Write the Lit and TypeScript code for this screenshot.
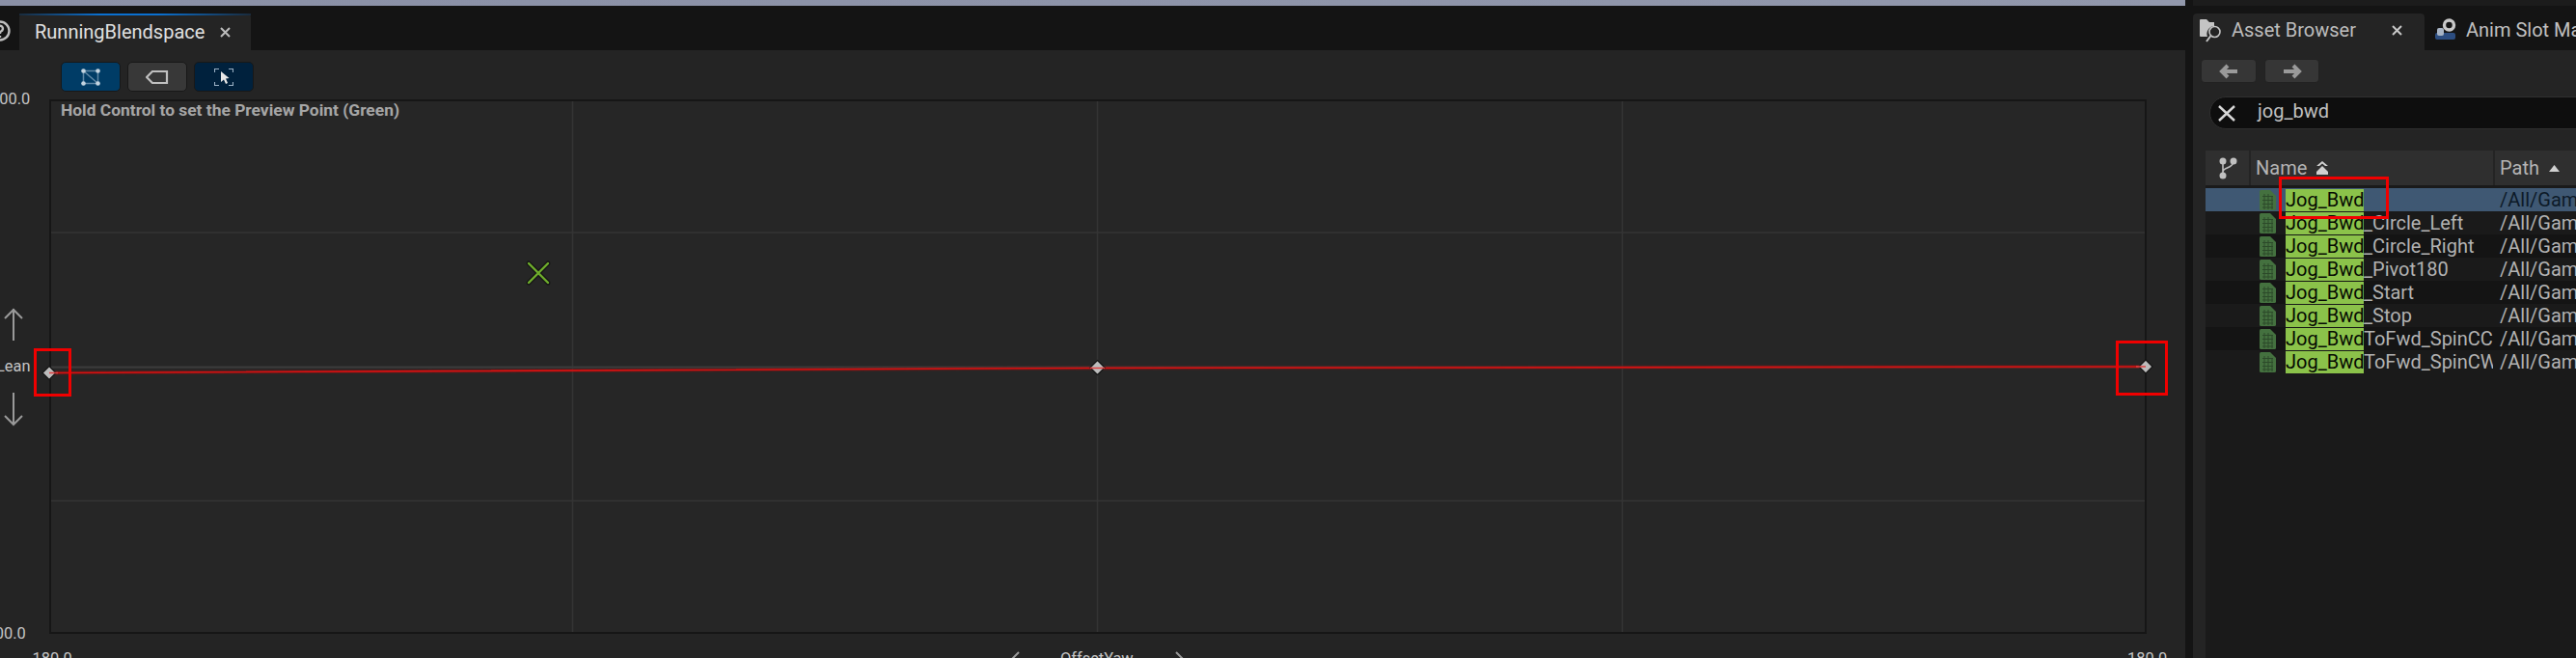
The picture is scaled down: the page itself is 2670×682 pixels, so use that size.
import { LitElement, html, css, svg } from "lit";
import { customElement } from "lit/decorators.js";

const ROWS = ["", "_Circle_Left", "_Circle_Right", "_Pivot180", "_Start", "_Stop", "ToFwd_SpinCCW", "ToFwd_SpinCW"];

const docIcon = html`<svg class="doc" viewBox="0 0 17 21" width="17" height="21">
  <path d="M0 1.5Q0 0 1.5 0H11L17 6V19.5Q17 21 15.5 21H1.5Q0 21 0 19.5Z" fill="#44713f"/>
  <path d="M3 6.5H14M3 10.5H14M3 14.5H14M3 18H14M5 4V20M9 4V20M13 6V20" stroke="#2c4a2a" stroke-width="1" fill="none"/>
</svg>`;

@customElement("app-root")
export class AppRoot extends LitElement {
  static styles = css`
    :host { display: block; width: 2670px; height: 682px; overflow: hidden; background: #242424; font-family: Roboto, "Noto Sans", sans-serif; }
    .root { display: grid; grid-template-columns: 2265px 8px 397px; height: 682px; }
    .sep { background: #141414; }
    .left, .right { display: flex; flex-direction: column; min-width: 0; position: relative; height: 682px; overflow: hidden; }
    .strip { height: 6px; background: linear-gradient(90deg, #8a90a6, #9298ac); flex: none; }
    .strip.dark { background: #1c1c1c; }
    .tabbar { height: 46px; flex: none; background: #141414; display: flex; align-items: flex-end; position: relative; }
    .left .tabbar { padding-left: 20px; }
    .tab { height: 38px; width: 240px; box-sizing: border-box; background: #242424; border-radius: 4px 4px 0 0; display: flex; align-items: center; font-size: 20px; color: #d0d0d0; flex: none; padding-bottom: 4px; }
    .tab.active-blue { border-top: 2px solid; border-image: linear-gradient(90deg, #1a2a3a, #0a70d0 35%, #0a70d0 60%, #1a2a3a) 1; padding: 0 0 2px 16px; color: #e0e0e0; width: 240px; }
    .tab .close { margin-left: auto; margin-right: 21px; display: flex; }
    .tab2 { background: #141414; padding: 0 0 4px 10px; width: 240px; }
    .tab2 .label { color: #c0c0c0; }
    .tabicon { margin: 0 9px 0 7px; flex: none; }
    .tab2 .gear { margin-right: 9px; flex: none; }
    .muted { color: #bdbdbd; }
    .help { position: absolute; left: -11px; top: 15px; }
    .toolbar { height: 51px; flex: none; display: flex; gap: 7px; padding: 12px 0 0 63px; box-sizing: border-box; }
    .tbtn { width: 62px; height: 31px; box-sizing: border-box; border: 1px solid #181818; border-radius: 5px; display: flex; align-items: center; justify-content: center; }
    .tbtn.a { background: #003c66; }
    .tbtn.b { background: #383838; }
    .tbtn.c { background: #00213d; }
    .graphwrap { position: relative; flex: 1; }
    .graph { position: absolute; left: 51px; top: 0; width: 2174px; height: 554px; box-sizing: border-box; border: 2px solid #161616; background: #262626; }
    .hint { position: absolute; left: 10px; top: -1px; font-size: 17.4px; line-height: 20px; font-weight: 700; color: #a6a6a6; white-space: nowrap; }
    .over { position: absolute; left: 0; top: 0; pointer-events: none; }
    .axis { position: absolute; font-size: 16.4px; line-height: 18px; color: #c4c4c4; white-space: nowrap; }
    .right { background: #242424; }
    .right .tabbar { padding-left: 0; }
    .nav { height: 48px; flex: none; display: flex; gap: 8px; padding: 9px 0 0 8px; box-sizing: border-box; }
    .navbtn { width: 58px; height: 25px; box-sizing: border-box; border: 1px solid #222; background: #363636; border-radius: 4px; display: flex; align-items: center; justify-content: center; }
    .navbtn + .navbtn { width: 57px; }
    .search { height: 34px; flex: none; margin-left: 17px; margin-right: -60px; box-sizing: border-box; background: #0e0e0e; border: 1px solid #2f2f2f; border-radius: 17px; display: flex; align-items: center; font-size: 20px; color: #c0c0c0; padding-left: 8px; }
    .search svg { margin-right: 23px; flex: none; }
    .search span { position: relative; top: -2px; }
    .list { margin-top: 22px; margin-left: 13px; flex: 1; display: flex; flex-direction: column; background: #1a1a1a; }
    .head { height: 36px; flex: none; background: #242424; display: grid; grid-template-columns: 45px 251px 1fr; gap: 2px; }
    .hc { background: #2f2f2f; display: flex; align-items: center; font-size: 20px; color: #b4b4b4; padding-left: 5px; gap: 10px; min-width: 0; }
    .hc.first { padding-left: 14px; }
    .rows { margin-top: 3px; display: flex; flex-direction: column; }
    .row { height: 24px; display: grid; grid-template-columns: 298px 1fr; font-size: 20px; line-height: 24px; color: #b2b2b2; background: #141414; }
    .row:nth-child(even) { background: #1a1a1a; }
    .row.sel { background: #3f5873; color: #0d1a28; }
    .name { display: flex; align-items: center; padding-left: 56px; overflow: hidden; white-space: nowrap; width: 298px; box-sizing: border-box; }
    .doc { flex: none; margin-right: 10px; }
    .mark { background: #8bc24a; color: #060a02; height: 23px; line-height: 23px; flex: none; width: 81px; overflow: hidden; }
    .path { padding-left: 7px; white-space: nowrap; overflow: hidden; }
    .redbox { position: absolute; box-sizing: border-box; border: 3px solid #f00000; }
  `;

  private graphLines() {
    // Coordinates are local to the overlay, whose origin is the left panel's graph area (y = 103 in the page).
    return svg`
      <g stroke="#343434" stroke-width="1.5" fill="none">
        <path d="M593.5 2V552M1137.5 2V552M1681.5 2V552"/>
        <path d="M53 138H2223M53 278H2223M53 416H2223"/>
      </g>
      <path d="M53 277.5H2223" stroke="#3a3a3a" stroke-width="2"/>
      <path d="M51 283.5L1137.5 278.5L2224 277" stroke="#8c1515" stroke-width="4" fill="none" opacity=".4"/>
      <path d="M51 283.5L1137.5 278.5L2224 277" stroke="#dc1010" stroke-width="1.6" fill="none"/>
      <g fill="#bcbcbc" stroke="#141414" stroke-width="1.2">
        <path d="M51 276.5L58 283.5L51 290.5L44 283.5Z"/>
        <path d="M1137.5 270.5L1145 278L1137.5 285.5L1130 278Z"/>
        <path d="M2224 270L2231 277L2224 284L2217 277Z"/>
      </g>
      <path d="M51 283.5H60M1130 278.500H1145M2214 277H2224" stroke="#e04040" stroke-width="1.500"/>
      <g stroke="#161616" stroke-width="5" stroke-linecap="round"><path d="M548 170L568 190M568 170L548 190"/></g>
      <g stroke="#6fae2c" stroke-width="2.400" stroke-linecap="round"><path d="M548 170L568 190M568 170L548 190"/></g>
      <g stroke="#9a9a9a" stroke-width="2" fill="none">
        <path d="M14 217V250M5 227L14 218L23 227"/>
        <path d="M14 304V337M5 328L14 337L23 328"/>
        <path d="M1056 573L1047 582M1219 573L1228 582"/>
      </g>`;
  }

  render() {
    return html`<div class="root">
      <section class="left">
        <div class="strip"></div>
        <div class="tabbar">
          <svg class="help" width="22" height="22" viewBox="0 0 22 22" fill="none" stroke="#bdbdbd" stroke-width="2.400"><circle cx="11" cy="11" r="9.500"/><path d="M8 8a3 3 0 1 1 4 3.500c-1 .5-1 1-1 2.500M11 16v2"/></svg>
          <div class="tab active-blue">RunningBlendspace
            <span class="close"><svg width="11" height="11" viewBox="0 0 11 11" stroke="#bcbcbc" stroke-width="2"><path d="M1 1L10 10M10 1L1 10"/></svg></span>
          </div>
        </div>
        <div class="toolbar">
          <div class="tbtn a"><svg width="20" height="18" viewBox="0 0 20 18" fill="#c4d4e0"><path d="M2.500 2.500H17.500V15.500H2.500ZM2.500 2.500L17.500 15.500" fill="none" stroke="#5f88a6" stroke-width="1.500"/><circle cx="2.500" cy="2.500" r="2.300"/><circle cx="17.500" cy="2.500" r="2.300"/><circle cx="2.500" cy="15.500" r="2.300"/><circle cx="17.500" cy="15.500" r="2.300"/></svg></div>
          <div class="tbtn b"><svg width="24" height="14" viewBox="0 0 24 14" fill="none" stroke="#c0c0c0" stroke-width="2.200"><path d="M7 1H22V13H7L1 7Z"/></svg></div>
          <div class="tbtn c"><svg width="20" height="18" viewBox="0 0 20 18" fill="none"><path d="M.5 4V.5H5M15 .5H19.500V4M.5 14V17.500H5M15 17.500H19.500V14" stroke="#9ab0c4" stroke-width="1.100"/><path d="M7 3L7 14L10 11.500L12 16L14 15L12 10.500L15.500 10Z" fill="#e8e8e8"/></svg></div>
        </div>
        <div class="graphwrap">
          <div class="graph"><div class="hint">Hold Control to set the Preview Point (Green)</div></div>
          <svg class="over" width="2265" height="579" viewBox="0 0 2265 579">${this.graphLines()}</svg>
          <div class="axis" style="left:-10px;top:-9px">100.0</div>
          <div class="axis" style="left:-19px;top:545px">-100.0</div>
          <div class="axis" style="left:-4px;top:268px">Lean</div>
          <div class="axis" style="left:29px;top:571px">-180.0</div>
          <div class="axis" style="left:1099px;top:571px">OffsetYaw</div>
          <div class="axis" style="left:2205px;top:571px">180.0</div>
          <div class="redbox" style="left:35px;top:258px;width:39px;height:50px"></div>
          <div class="redbox" style="left:2193px;top:250px;width:54px;height:57px"></div>
        </div>
      </section>
      <div class="sep"></div>
      <section class="right">
        <div class="strip dark"></div>
        <div class="tabbar">
          <div class="tab">
            <svg class="tabicon" width="24" height="25" viewBox="0 0 24 25"><path d="M0 2Q0 1 1 1H7L10 4H15V8A8 8 0 0 0 8 19H1Q0 19 0 18Z" fill="#c4c4c4"/><circle cx="15.500" cy="14" r="5.500" fill="none" stroke="#c4c4c4" stroke-width="1.600"/><path d="M11.500 18L7 24" stroke="#c4c4c4" stroke-width="2"/></svg>
            <span class="muted">Asset Browser</span>
            <span class="close" style="margin-right:23px"><svg width="11" height="11" viewBox="0 0 11 11" stroke="#c8c8c8" stroke-width="2"><path d="M1 1L10 10M10 1L1 10"/></svg></span>
          </div>
          <div class="tab tab2">
            <svg class="gear" width="24" height="24" viewBox="0 0 24 24"><rect x="1" y="15" width="21" height="7" rx="2" fill="#2c4d80"/><circle cx="15.500" cy="7" r="5" fill="none" stroke="#c8c8c8" stroke-width="3.400"/><rect x="3" y="10" width="7" height="8" rx="2" fill="#a8b4c4"/></svg>
            <span class="label">Anim Slot Manager</span>
          </div>
        </div>
        <div class="nav">
          <div class="navbtn"><svg width="20" height="16" viewBox="0 0 20 16" fill="none" stroke="#9a9a9a" stroke-width="4"><path d="M19 8H3M9 2L3 8L9 14"/></svg></div>
          <div class="navbtn"><svg width="20" height="16" viewBox="0 0 20 16" fill="none" stroke="#9a9a9a" stroke-width="4"><path d="M1 8H17M11 2L17 8L11 14"/></svg></div>
        </div>
        <div class="search">
          <svg width="18" height="17" viewBox="0 0 18 17" stroke="#d8d8d8" stroke-width="2.400"><path d="M1 1L17 16M17 1L1 16"/></svg>
          <span>jog_bwd</span>
        </div>
        <div class="list">
          <div class="head">
            <div class="hc first"><svg width="19" height="23" viewBox="0 0 19 23" fill="#c0c0c0"><circle cx="4" cy="4" r="3.500"/><circle cx="15" cy="4" r="3.500"/><circle cx="4" cy="19" r="3.500"/><path d="M4 4V19M4 15C4 10 15 12 15 4" fill="none" stroke="#c0c0c0" stroke-width="1.600"/></svg></div>
            <div class="hc">Name <svg width="12" height="14" viewBox="0 0 12 14" fill="#d0d0d0"><path d="M6 0L12 5H9L6 2.500L3 5H0Z"/><path d="M6 5L12 11V14H0V11Z"/></svg></div>
            <div class="hc">Path <svg width="11" height="7" viewBox="0 0 11 7" fill="#d0d0d0"><path d="M5.500 0L11 7H0Z"/></svg></div>
          </div>
          <div class="rows">
            ${ROWS.map((suffix, i) => html`<div class="row ${i === 0 ? "sel" : ""}">
              <div class="name">${docIcon}<span class="mark">Jog_Bwd</span><span>${suffix}</span></div>
              <div class="path">/All/Game/Characters</div>
            </div>`)}
          </div>
        </div>
        <div class="redbox" style="left:89px;top:183px;width:114px;height:44px"></div>
      </section>
    </div>`;
  }
}
